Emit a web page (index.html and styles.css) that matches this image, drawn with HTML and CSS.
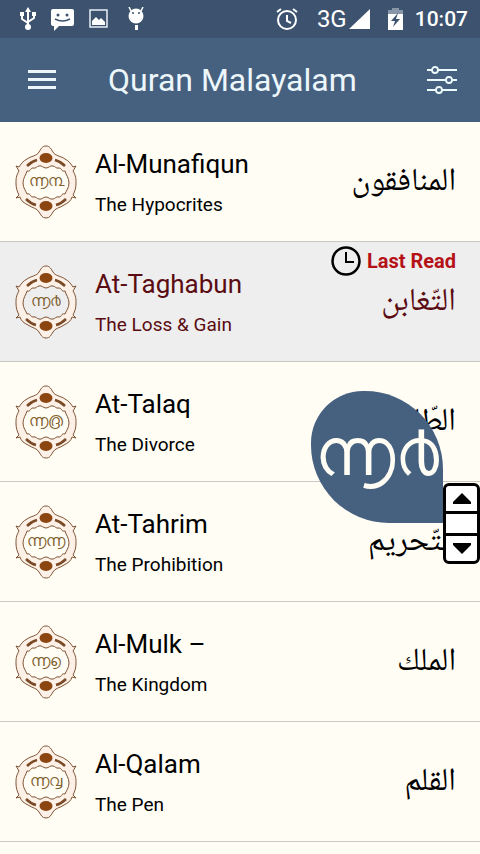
FILE: index.html
```html
<!DOCTYPE html>
<html lang="en">
<head>
<meta charset="utf-8">
<meta name="viewport" content="width=device-width, initial-scale=1">
<title>Quran Malayalam</title>
<link rel="stylesheet" href="styles.css">
</head>
<body>
<svg class="defs" aria-hidden="true">
  <symbol id="medal" viewBox="0 0 62 74">
    <path class="medal-ring" fill-rule="evenodd" d="M31 1c-4 0-5 3-7 6-2 4-8 4-12 7-4 2-6 5-8 8l-3-1 3 5C1 31 1 34 1 38c0 5 1 8 3 12l-3 3 4-1c1 4 4 6 8 8 4 3 9 3 11 7 2 3 3 6 7 6s5-3 7-6c2-4 7-4 11-7 4-2 7-4 8-8l4 1-3-3c2-4 3-7 3-12 0-4 0-7-3-12l3-5-3 1c-2-3-4-6-8-8-4-3-10-3-12-7-2-3-3-6-7-6ZM24 21c3-1 4 2 7 2s4-3 7-2c2 0 3 3 6 2 3 0 2 4 6 3 1 4 4 7 4 12s-3 8-4 11c-4-1-3 3-6 3-3-1-4 2-6 2-3 1-4-2-7-2s-4 3-7 2c-2 0-3-3-6-2-3 0-2-4-6-3-1-3-4-6-4-11s3-8 4-12c4 1 3-3 6-3 3 1 4-2 6-2Z"/>
    <ellipse class="medal-stone" cx="31" cy="13" rx="6.5" ry="5"/>
    <ellipse class="medal-stone" cx="31" cy="61" rx="6.5" ry="5"/>
    <path class="medal-dash" d="M12 21c3-3 6-5 10-6M50 21c-3-3-6-5-10-6M11 54c3 3 6 5 10 6M51 54c-3 3-6 5-10 6"/>
  </symbol>
</svg>

<header class="top">
  <div class="status">
    <div class="status-left">
      <svg width="16" height="24" viewBox="0 0 16 24" aria-hidden="true"><g fill="none" stroke="#fff" stroke-width="2"><path d="M8 3v16M2 8v4l6 4M14 7v4l-6 4"/></g><path fill="#fff" d="M8 0l3 5H5ZM0 5h4v4H0ZM12 5h4v4h-4Z"/><circle cx="8" cy="20" r="3" fill="#fff"/></svg>
      <svg class="chat" width="24" height="24" viewBox="0 0 24 24" aria-hidden="true"><path fill="#fff" d="M3 2h19a2 2 0 0 1 2 2v13a2 2 0 0 1-2 2H9l-5 5v-5H3a2 2 0 0 1-2-2V4a2 2 0 0 1 2-2Z"/><circle cx="8" cy="8" r="1.5" fill="#3c526f"/><circle cx="17" cy="8" r="1.5" fill="#3c526f"/><path d="M5 12q7.500 4 15 0" fill="none" stroke="#3c526f" stroke-width="1.500"/></svg>
      <svg class="photo" width="20" height="20" viewBox="0 0 20 20" aria-hidden="true"><path fill="none" stroke="#e8f0f6" stroke-width="1.500" d="M1 1h17v17H1Z"/><path fill="#fff" d="M3 16v-4l4-4 3 3 2-2 4 4v3Z"/></svg>
      <svg class="bug" width="18" height="24" viewBox="0 0 18 24" aria-hidden="true"><path stroke="#fff" stroke-width="1.500" d="M4 4 2 0M14 4l2-4"/><circle cx="9" cy="9" r="7.500" fill="#fff"/><path fill="#fff" d="M8 18h3v5H8Z"/><circle cx="6" cy="6" r="1" fill="#3c526f"/><circle cx="12" cy="6" r="1" fill="#3c526f"/></svg>
    </div>
    <div class="status-right">
      <svg width="24" height="24" viewBox="0 0 24 24" aria-hidden="true"><g fill="none" stroke="#fff" stroke-width="2"><circle cx="12" cy="13" r="9"/><path d="M12 8v6l4 2M2 5l4-3M22 5l-4-3"/></g></svg>
      <span class="network">3G</span>
      <svg class="signal" width="21" height="20" viewBox="0 0 21 20" aria-hidden="true"><path fill="#fff" d="M21 0v20H0Z"/></svg>
      <svg class="battery" width="15" height="22" viewBox="0 0 15 22" aria-hidden="true"><path fill="#8797a9" d="M4 0h7v2h4v6H0V2h4Z"/><path fill="#fff" d="M0 6h15v16H0Z"/><path fill="#3c526f" d="m10 5-7 8h4l-2 6 7-8H8Z"/></svg>
      <time class="clock">10:07</time>
    </div>
  </div>
  <div class="bar">
    <button class="icon-button" aria-label="Menu"><svg width="28" height="22" viewBox="0 0 28 22"><path fill="#edf7fb" d="M0 1h28v3H0ZM0 9h28v3H0ZM0 17h28v3H0Z"/></svg></button>
    <h1>Quran Malayalam</h1>
    <button class="icon-button" aria-label="Settings"><svg width="30" height="28" viewBox="0 0 30 28"><g fill="#466180" stroke="#edfafb" stroke-width="1.800"><path d="M0 4h30M0 14h30M0 24h30"/><circle cx="8" cy="4" r="3"/><circle cx="22" cy="14" r="3"/><circle cx="12" cy="24" r="3"/></g></svg></button>
  </div>
</header>

<main>
  <ul class="list">
    <li class="row"><div class="medal"><svg aria-hidden="true"><use href="#medal"/></svg><span lang="ml">൬൩</span></div><div class="names"><h2>Al-Munafiqun</h2><p>The Hypocrites</p></div><span class="arabic" lang="ar" dir="rtl">المنافقون</span></li>
    <li class="row current"><div class="medal"><svg aria-hidden="true"><use href="#medal"/></svg><span lang="ml">൬൪</span></div><div class="names"><h2>At-Taghabun</h2><p>The Loss &amp; Gain</p></div><span class="arabic" lang="ar" dir="rtl">التّغابن</span><div class="last-read"><svg width="30" height="30" viewBox="0 0 30 30" aria-hidden="true"><circle cx="15" cy="15" r="13.500" fill="none" stroke="#000" stroke-width="2.500"/><path d="M15 6v10h8" fill="none" stroke="#000" stroke-width="2"/></svg>Last Read</div></li>
    <li class="row"><div class="medal"><svg aria-hidden="true"><use href="#medal"/></svg><span lang="ml">൬൫</span></div><div class="names"><h2>At-Talaq</h2><p>The Divorce</p></div><span class="arabic" lang="ar" dir="rtl">الطّلاق</span></li>
    <li class="row"><div class="medal"><svg aria-hidden="true"><use href="#medal"/></svg><span lang="ml">൬൬</span></div><div class="names"><h2>At-Tahrim</h2><p>The Prohibition</p></div><span class="arabic" lang="ar" dir="rtl">التّحريم</span></li>
    <li class="row"><div class="medal"><svg aria-hidden="true"><use href="#medal"/></svg><span lang="ml">൬൭</span></div><div class="names"><h2>Al-Mulk –</h2><p>The Kingdom</p></div><span class="arabic" lang="ar" dir="rtl">الملك</span></li>
    <li class="row"><div class="medal"><svg aria-hidden="true"><use href="#medal"/></svg><span lang="ml">൬൮</span></div><div class="names"><h2>Al-Qalam</h2><p>The Pen</p></div><span class="arabic" lang="ar" dir="rtl">القلم</span></li>
  </ul>
  <div class="scroller">
    <div class="bubble" lang="ml">൬൪</div>
    <div class="thumb">
      <button aria-label="Scroll up"><svg width="18" height="11" viewBox="0 0 18 11"><path d="M9 0l9 9v2H0V9Z"/></svg></button>
      <span></span>
      <button aria-label="Scroll down"><svg width="18" height="11" viewBox="0 0 18 11"><path d="M9 11l9-9V0H0v2Z"/></svg></button>
    </div>
  </div>
</main>
</body>
</html>
```
FILE: styles.css
```css
* { box-sizing: border-box; margin: 0; padding: 0; }
html, body { min-height: 100%; }
body {
  background: #fffdf4;
  color: #000;
  font-family: Roboto, "Liberation Sans", sans-serif;
  overflow-x: hidden;
}
button { border: 0; background: none; cursor: pointer; }
svg { display: block; flex: none; }
.defs { position: absolute; width: 0; height: 0; }

.status {
  height: 38px;
  padding: 0 12px 0 20px;
  display: flex;
  align-items: center;
  justify-content: space-between;
  background: #3c526f;
  color: #fff;
}
.status-left, .status-right { display: flex; align-items: center; }
.chat { margin-left: 14px; }
.photo { margin-left: 15px; }
.bug { margin-left: 18px; }
.network { margin-left: 18px; font-size: 24px; line-height: 38px; }
.signal { margin-left: 2px; }
.battery { margin: 0 12px 0 18px; }
.clock { font-size: 21px; font-weight: 500; line-height: 38px; }

.bar {
  height: 84px;
  padding: 0 23px 0 28px;
  display: flex;
  align-items: center;
  background: #466180;
  color: #edf7fb;
}
.bar h1 {
  flex: 1;
  padding-left: 52px;
  font-size: 32px;
  font-weight: 400;
  line-height: 40px;
}

main { position: relative; }
.list { list-style: none; }
.row {
  position: relative;
  height: 120px;
  padding: 0 24px 0 15px;
  display: flex;
  align-items: center;
  border-bottom: 1px solid #c9c8c4;
}
.current { background: #eee; color: #5a0c12; }
.medal {
  width: 62px;
  height: 74px;
  display: grid;
  place-items: center;
  color: #80602f;
  font-size: 16px;
  line-height: 24px;
}
.medal > * { grid-area: 1 / 1; }
.medal svg { width: 62px; height: 74px; }
.medal span { padding-bottom: 2px; }
.medal-ring { fill: #fdf1e7; stroke: #7d5335; stroke-width: 1; }
.medal-stone { fill: #8a4510; }
.medal-dash { fill: none; stroke: #7a4a26; stroke-width: 2.5; }
.names { flex: 1; padding: 2px 0 0 18px; }
.names h2 { font-size: 26px; font-weight: 400; line-height: 44px; }
.names p { font-size: 19px; line-height: 38px; }
.arabic {
  font-family: "Noto Naskh Arabic UI", "Noto Naskh Arabic", "Noto Sans Arabic", "DejaVu Sans", sans-serif;
  font-size: 32px;
  line-height: 48px;
}
.last-read {
  position: absolute;
  top: 4px;
  right: 24px;
  display: flex;
  align-items: center;
  gap: 6px;
  color: #b51218;
  font-size: 20px;
  font-weight: 700;
}

.scroller {
  position: absolute;
  top: 269px;
  right: 0;
  display: flex;
  align-items: flex-start;
}
.bubble {
  width: 132px;
  height: 132px;
  padding-bottom: 8px;
  border-radius: 52px 78px 0 78px;
  display: grid;
  place-items: center;
  background: #466180;
  color: #fffdf4;
  font-size: 66px;
  line-height: 80px;
}
.thumb {
  width: 37px;
  height: 81px;
  margin-top: 92px;
  display: grid;
  grid-template-rows: 1fr 1fr 1fr;
  border: 3px solid #000;
  border-radius: 6px;
  background: #fff;
}
.thumb > * { display: grid; place-items: center; }
.thumb span { border-top: 3px solid #000; border-bottom: 3px solid #000; }
```
